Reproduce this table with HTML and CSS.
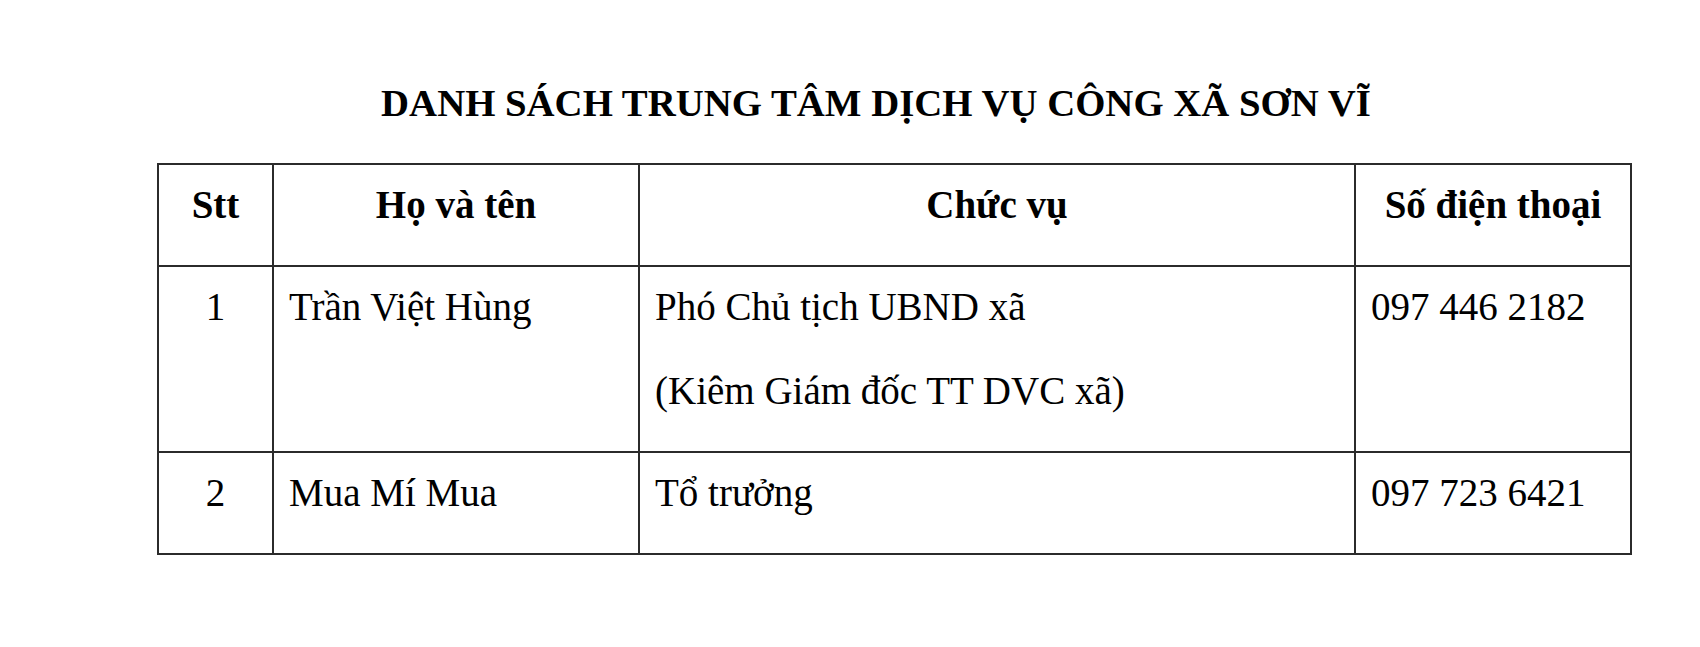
FILE: index.html
```html
<!DOCTYPE html>
<html lang="vi">
<head>
<meta charset="utf-8">
<title>Danh sách Trung tâm dịch vụ công xã Sơn Vĩ</title>
<link rel="stylesheet" href="styles.css">
</head>
<body>
<main class="page">
  <h1 class="title">DANH SÁCH TRUNG TÂM DỊCH VỤ CÔNG XÃ SƠN VĨ</h1>
  <table class="list">
    <colgroup>
      <col class="c-stt">
      <col class="c-name">
      <col class="c-role">
      <col class="c-phone">
    </colgroup>
    <thead>
      <tr>
        <th><p>Stt</p></th>
        <th><p>Họ và tên</p></th>
        <th><p>Chức vụ</p></th>
        <th><p>Số điện thoại</p></th>
      </tr>
    </thead>
    <tbody>
      <tr>
        <td class="num"><p>1</p></td>
        <td><p>Trần Việt Hùng</p></td>
        <td><p>Phó Chủ tịch UBND xã</p><p>(Kiêm Giám đốc TT DVC xã)</p></td>
        <td><p>097 446 2182</p></td>
      </tr>
      <tr>
        <td class="num"><p>2</p></td>
        <td><p>Mua Mí Mua</p></td>
        <td><p>Tổ trưởng</p></td>
        <td><p>097 723 6421</p></td>
      </tr>
    </tbody>
  </table>
</main>
</body>
</html>
```
FILE: styles.css
```css
html, body {
  margin: 0;
  padding: 0;
  background: #ffffff;
}

body {
  font-family: "Liberation Serif", "Times New Roman", serif;
  color: #000000;
  width: 1700px;
  height: 647px;
  overflow: hidden;
}

.page {
  padding: 80px 0 0 157px;
}

.title {
  margin: 0 0 38px 0;
  width: 1473px;
  padding-right: 35px;
  box-sizing: border-box;
  text-align: center;
  font-size: 38.8px;
  line-height: 45px;
  font-weight: bold;
}

.list {
  border-collapse: collapse;
  table-layout: fixed;
  width: 1475px;
}

.c-stt { width: 115px; }
.c-name { width: 366px; }
.c-role { width: 716px; }
.c-phone { width: 276px; }

.list th,
.list td {
  border: 2px solid #2b2b2b;
  padding: 10px 15px 6px 15px;
  vertical-align: top;
  font-family: "Liberation Serif", "Times New Roman", serif;
  font-size: 39px;
  text-align: left;
}

.list th {
  font-weight: bold;
  text-align: center;
  padding-left: 4px;
  padding-right: 4px;
}

.list td.num {
  text-align: center;
}

.list p {
  margin: 0 0 24px 0;
  line-height: 60px;
  white-space: nowrap;
}
```
